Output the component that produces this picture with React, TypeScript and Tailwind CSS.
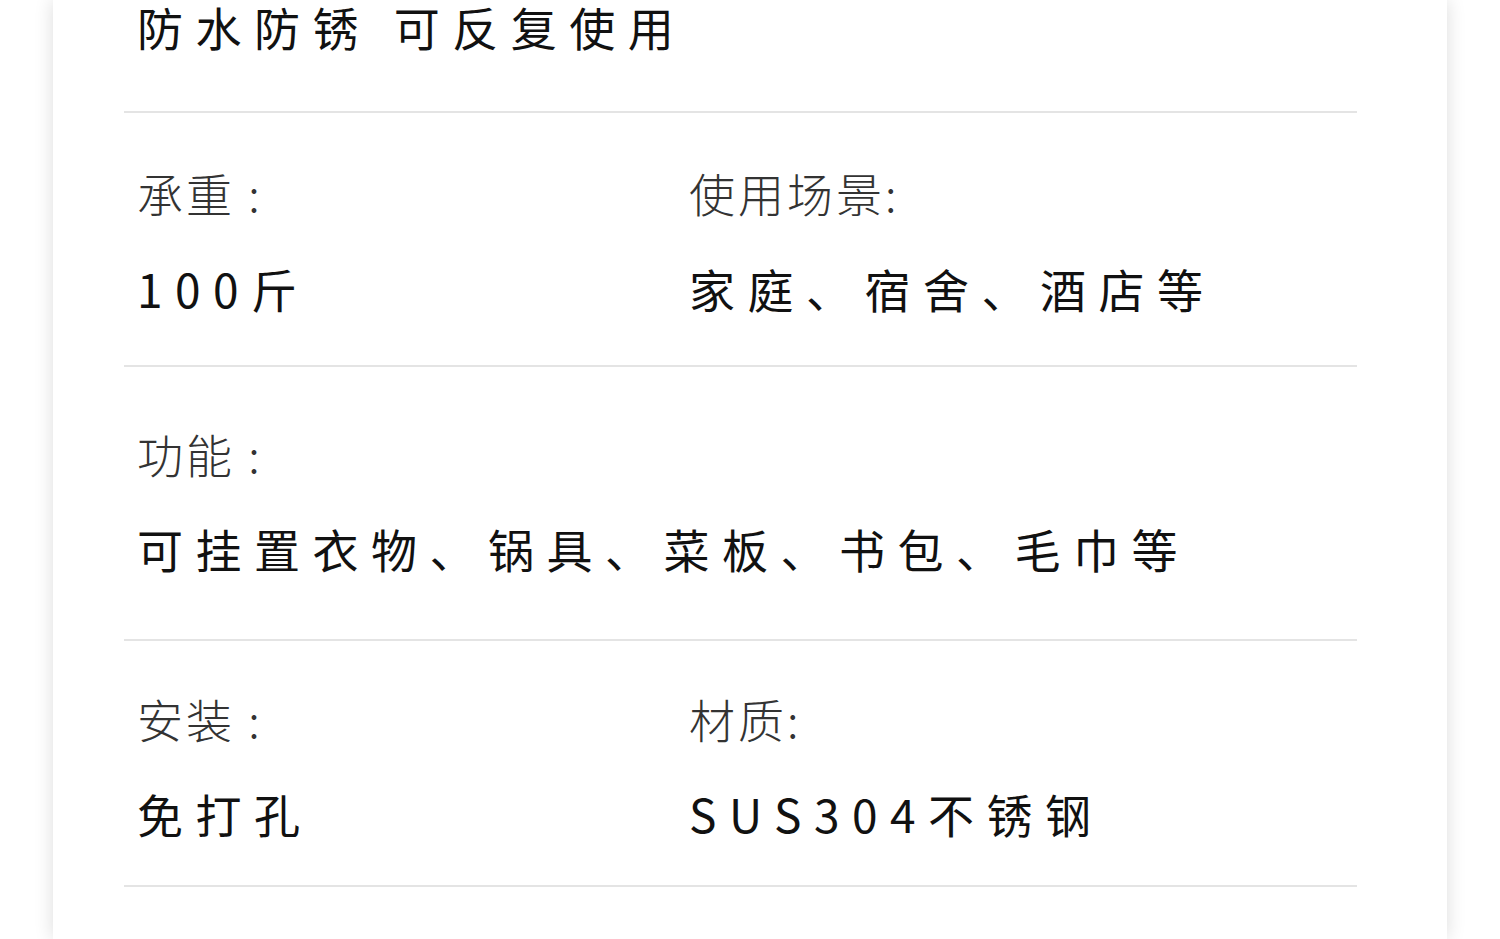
const font = { fontFamily: '"Noto Sans CJK SC", "Noto Sans", sans-serif' };

function Label({ children }: { children: React.ReactNode }) {
  return <div className="text-[46px] leading-[46px] tracking-[3px] text-[#333] font-light">{children}</div>;
}

function Value({ children }: { children: React.ReactNode }) {
  return (
    <div className="text-[46px] leading-[46px] tracking-[12.5px] text-[#111] whitespace-nowrap [text-spacing-trim:space-all]">
      {children}
    </div>
  );
}

export default function App() {
  return (
    <div className="w-[1500px] h-[939px] bg-white overflow-hidden" style={font}>
      <div className="ml-[53px] w-[1394px] h-full bg-white shadow-[0_0_18px_rgba(0,0,0,0.14)] pl-[71px] pr-[90px]">
        {/* top tagline */}
        <div className="pl-[13px] pt-[3px] pb-[62px] border-b-2 border-[#e4e4e4]">
          <Value>防水防锈 可反复使用</Value>
        </div>

        {/* 承重 / 使用场景 */}
        <div className="grid grid-cols-[552px_1fr] pl-[13px] pt-[56px] pb-[54px] border-b-2 border-[#e4e4e4]">
          <div className="flex flex-col gap-[50px]">
            <Label>承重 :</Label>
            <Value>100斤</Value>
          </div>
          <div className="flex flex-col gap-[50px]">
            <Label>使用场景:</Label>
            <Value>家庭、宿舍、酒店等</Value>
          </div>
        </div>

        {/* 功能 */}
        <div className="flex flex-col gap-[49px] pl-[13px] pt-[63px] pb-[68px] border-b-2 border-[#e4e4e4]">
          <Label>功能 :</Label>
          <Value>可挂置衣物、锅具、菜板、书包、毛巾等</Value>
        </div>

        {/* 安装 / 材质 */}
        <div className="grid grid-cols-[552px_1fr] pl-[13px] pt-[54px] pb-[49px] border-b-2 border-[#e4e4e4]">
          <div className="flex flex-col gap-[49px]">
            <Label>安装 :</Label>
            <Value>免打孔</Value>
          </div>
          <div className="flex flex-col gap-[49px]">
            <Label>材质:</Label>
            <Value>SUS304不锈钢</Value>
          </div>
        </div>
      </div>
    </div>
  );
}
